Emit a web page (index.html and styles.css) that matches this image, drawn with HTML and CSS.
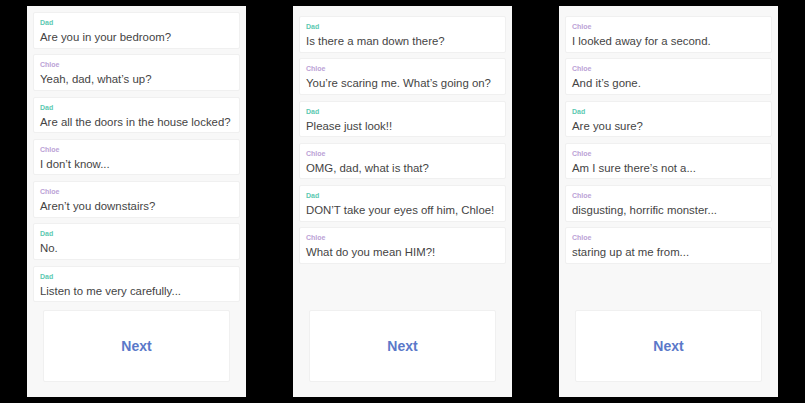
FILE: index.html
```html
<!DOCTYPE html>
<html lang="en">
<head>
<meta charset="utf-8">
<title>Chat story</title>
<link rel="stylesheet" href="styles.css">
</head>
<body>
<main class="stage">
  <section class="phone">
    <div class="thread">
      <div class="msg"><span class="who dad">Dad</span><span class="line">Are you in your bedroom?</span></div>
      <div class="msg"><span class="who chloe">Chloe</span><span class="line">Yeah, dad, what’s up?</span></div>
      <div class="msg"><span class="who dad">Dad</span><span class="line">Are all the doors in the house locked?</span></div>
      <div class="msg"><span class="who chloe">Chloe</span><span class="line">I don’t know...</span></div>
      <div class="msg"><span class="who chloe">Chloe</span><span class="line">Aren’t you downstairs?</span></div>
      <div class="msg"><span class="who dad">Dad</span><span class="line">No.</span></div>
      <div class="msg"><span class="who dad">Dad</span><span class="line">Listen to me very carefully...</span></div>
    </div>
    <button class="next">Next</button>
  </section>
  <section class="phone phone-low">
    <div class="thread">
      <div class="msg"><span class="who dad">Dad</span><span class="line">Is there a man down there?</span></div>
      <div class="msg"><span class="who chloe">Chloe</span><span class="line">You’re scaring me. What’s going on?</span></div>
      <div class="msg"><span class="who dad">Dad</span><span class="line">Please just look!!</span></div>
      <div class="msg"><span class="who chloe">Chloe</span><span class="line">OMG, dad, what is that?</span></div>
      <div class="msg"><span class="who dad">Dad</span><span class="line">DON’T take your eyes off him, Chloe!</span></div>
      <div class="msg"><span class="who chloe">Chloe</span><span class="line">What do you mean HIM?!</span></div>
    </div>
    <button class="next">Next</button>
  </section>
  <section class="phone phone-low">
    <div class="thread">
      <div class="msg"><span class="who chloe">Chloe</span><span class="line">I looked away for a second.</span></div>
      <div class="msg"><span class="who chloe">Chloe</span><span class="line">And it’s gone.</span></div>
      <div class="msg"><span class="who dad">Dad</span><span class="line">Are you sure?</span></div>
      <div class="msg"><span class="who chloe">Chloe</span><span class="line">Am I sure there’s not a...</span></div>
      <div class="msg"><span class="who chloe">Chloe</span><span class="line">disgusting, horrific monster...</span></div>
      <div class="msg"><span class="who chloe">Chloe</span><span class="line">staring up at me from...</span></div>
    </div>
    <button class="next">Next</button>
  </section>
</main>
</body>
</html>
```
FILE: styles.css
```css
* { box-sizing: border-box; }
html, body {
  margin: 0;
  padding: 0;
  background: #000;
}
body {
  font-family: "Liberation Sans", Arial, sans-serif;
  width: 805px;
  height: 403px;
  overflow: hidden;
}
.stage {
  display: flex;
  gap: 47px;
  padding: 6px 0 0 27px;
}
.phone {
  width: 219px;
  height: 391px;
  background: #f8f8f8;
  display: flex;
  flex-direction: column;
  padding: 6px 6px 15px;
  overflow: hidden;
}
.phone-low { padding-top: 10px; }
.thread {
  display: flex;
  flex-direction: column;
  gap: 5.8px;
}
.msg {
  height: 36.5px;
  background: #fff;
  border: 1px solid #f0f0f0;
  border-radius: 2px;
  padding: 6px 6px 0;
  display: flex;
  flex-direction: column;
}
.who {
  font-size: 7px;
  line-height: 8px;
  font-weight: 700;
}
.dad { color: #5cc9b1; }
.chloe { color: #bba2d6; }
.line {
  margin-top: 2px;
  font-size: 11.4px;
  line-height: 16px;
  color: #444;
  white-space: nowrap;
}
.next {
  margin: auto 10px 0;
  height: 72px;
  flex: none;
  background: #fff;
  border: 1px solid #f0f0f0;
  border-radius: 2px;
  font-family: inherit;
  font-size: 14px;
  font-weight: 700;
  color: #5b78c9;
}
```
